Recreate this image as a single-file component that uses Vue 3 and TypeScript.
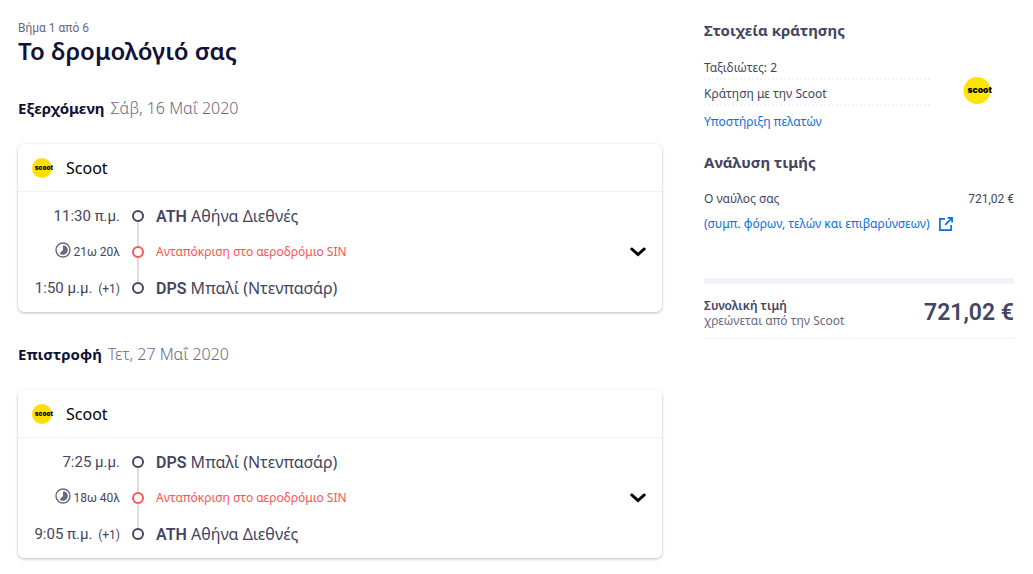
<script setup lang="ts">
interface Stop {
  time: string
  nextDay?: string
  code: string
  name: string
}

interface Leg {
  title: string
  date: string
  from: Stop
  duration: string
  layover: string
  to: Stop
}

const carrier = 'Scoot'

const legs: Leg[] = [
  {
    title: 'Εξερχόμενη',
    date: 'Σάβ, 16 Μαΐ 2020',
    from: { time: '11:30 π.μ.', code: 'ATH', name: 'Αθήνα Διεθνές' },
    duration: '21ω 20λ',
    layover: 'Ανταπόκριση στο αεροδρόμιο SIN',
    to: { time: '1:50 μ.μ.', nextDay: '(+1)', code: 'DPS', name: 'Μπαλί (Ντενπασάρ)' },
  },
  {
    title: 'Επιστροφή',
    date: 'Τετ, 27 Μαΐ 2020',
    from: { time: '7:25 μ.μ.', code: 'DPS', name: 'Μπαλί (Ντενπασάρ)' },
    duration: '18ω 40λ',
    layover: 'Ανταπόκριση στο αεροδρόμιο SIN',
    to: { time: '9:05 π.μ.', nextDay: '(+1)', code: 'ATH', name: 'Αθήνα Διεθνές' },
  },
]
</script>

<template>
  <div class="page">
    <main>
      <p class="step">Βήμα 1 από 6</p>
      <h1>Το δρομολόγιό σας</h1>

      <section v-for="leg in legs" :key="leg.title" class="leg">
        <h2>{{ leg.title }} <span class="date">{{ leg.date }}</span></h2>
        <article class="card">
          <header class="carrier">
            <svg class="logo-small" viewBox="0 0 31 28" aria-hidden="true">
              <circle cx="14" cy="14" r="14" fill="#ffdf00" />
              <text x="4" y="17" class="logo-text">scoot</text>
            </svg>
            <span>{{ carrier }}</span>
          </header>
          <div class="body">
            <ol class="route">
              <li>
                <span class="time">{{ leg.from.time }}</span>
                <span class="dot"></span>
                <span class="place"><b>{{ leg.from.code }}</b> {{ leg.from.name }}</span>
              </li>
              <li class="layover">
                <span class="duration">
                  <svg class="clock" viewBox="0 0 16 16" aria-hidden="true">
                    <circle cx="8" cy="8" r="7" fill="none" stroke="currentColor" stroke-width="1.4" />
                    <path d="M8 3.2a4.8 4.8 0 1 1-3.4 8.2L8 8z" fill="currentColor" />
                  </svg>
                  <span>{{ leg.duration }}</span>
                </span>
                <span class="dot"></span>
                <span>{{ leg.layover }}</span>
              </li>
              <li>
                <span class="time">{{ leg.to.time }} <small>{{ leg.to.nextDay }}</small></span>
                <span class="dot"></span>
                <span class="place"><b>{{ leg.to.code }}</b> {{ leg.to.name }}</span>
              </li>
            </ol>
            <button class="toggle" type="button" aria-label="Λεπτομέρειες" aria-expanded="false">
              <svg viewBox="0 0 16 10" aria-hidden="true">
                <path d="M1.7 1.9 8 7.6l6.3-5.7" fill="none" stroke="#000" stroke-width="2.8" stroke-linecap="round" stroke-linejoin="miter" />
              </svg>
            </button>
          </div>
        </article>
      </section>
    </main>

    <aside>
      <h3>Στοιχεία κράτησης</h3>
      <div class="booking">
        <div class="facts">
          <p class="fact">Ταξιδιώτες: 2</p>
          <p class="fact">Κράτηση με την Scoot</p>
          <a class="support" href="#">Υποστήριξη πελατών</a>
        </div>
        <svg class="logo-large" viewBox="0 0 31 28" aria-hidden="true">
          <circle cx="14" cy="14" r="14" fill="#ffe600" />
          <text x="4" y="17" class="logo-text">scoot</text>
        </svg>
      </div>

      <h3 class="breakdown">Ανάλυση τιμής</h3>
      <p class="fare"><span>Ο ναύλος σας</span><span class="amount">721,02 €</span></p>
      <a class="taxes" href="#">
        (συμπ. φόρων, τελών και επιβαρύνσεων)
        <svg viewBox="0 0 14 14" aria-hidden="true">
          <path d="M6 1.8H.9v11.3h11.2V8M8.5.9h4.6v4.6M13 1 6.2 7.8" fill="none" stroke="currentColor" stroke-width="1.7" />
        </svg>
      </a>

      <div class="total">
        <p><strong>Συνολική τιμή</strong><span>χρεώνεται από την Scoot</span></p>
        <span class="price">721,02 €</span>
      </div>
    </aside>
  </div>
</template>

<style>
body {
  margin: 0;
  background: #fff;
}
</style>

<style scoped>
.page {
  display: grid;
  grid-template-columns: minmax(0, 1fr) 310px;
  gap: 42px;
  padding: 20px 19px 16px 18px;
  font-family: "Noto Sans", "Liberation Sans", sans-serif;
  font-size: 12px;
  line-height: 16px;
  color: #444560;
}

h1, h2, h3, p, ol {
  margin: 0;
  padding: 0;
}

a {
  color: #0770e3;
  text-decoration: none;
}

.step {
  font-family: Roboto, "Noto Sans", sans-serif;
  color: #68697f;
}

h1 {
  font-size: 24px;
  line-height: 30px;
  color: #111236;
  font-weight: 600;
}

.leg {
  margin-top: 30px;
}

h2 {
  margin-bottom: 24px;
  font-size: 15px;
  line-height: 24px;
  color: #111236;
}

.date {
  margin-left: 2px;
  font-size: 16px;
  font-weight: 300;
  color: #68697f;
}

.card {
  border-radius: 6px;
  background: #fff;
  box-shadow: 0 1px 3px rgba(37, 32, 31, 0.3);
}

.carrier {
  display: flex;
  align-items: center;
  gap: 12px;
  height: 47px;
  padding-left: 14px;
  border-bottom: 1px solid #f1f2f8;
  font-size: 16px;
  color: #000;
}

.logo-small {
  flex: none;
  width: 22px;
  height: 20px;
  overflow: visible;
}

.logo-text {
  font: 900 9px "Inter", sans-serif;
  fill: #000;
}

.body {
  display: flex;
  align-items: center;
  padding: 6px 16px 6px 0;
}

.route {
  flex: 1;
  list-style: none;
}

.route li {
  display: grid;
  grid-template-columns: 102px 36px minmax(0, 1fr);
  align-items: center;
  height: 36px;
}

.time,
.place {
  line-height: 24px;
}

.place {
  font-size: 16px;
}

.place b {
  font-family: Roboto, "Noto Sans", sans-serif;
  font-weight: 600;
}

.time,
.duration {
  font-family: Roboto, "Noto Sans", sans-serif;
  text-align: right;
  white-space: nowrap;
}

.time {
  font-size: 15px;
}

.time small {
  margin-left: 2px;
  font-size: 12px;
}

.layover {
  padding-top: 0;
  color: #ff5452;
}

.duration {
  display: flex;
  align-items: center;
  justify-content: flex-end;
  gap: 3px;
  color: #444560;
}

.clock {
  width: 16px;
  height: 16px;
  margin-bottom: 4px;
  color: #68697f;
}

.dot {
  position: relative;
  justify-self: center;
  box-sizing: border-box;
  width: 12px;
  height: 12px;
  border: 2px solid #444560;
  border-radius: 50%;
}

.layover .dot {
  border-color: #ff5452;
}

li:not(:last-child) .dot::after {
  content: "";
  position: absolute;
  top: 10px;
  left: 3px;
  width: 2px;
  height: 24px;
  background: #dddde5;
}

.toggle {
  padding: 0;
  border: 0;
  background: none;
  cursor: pointer;
}

.toggle svg {
  display: block;
  width: 16px;
  height: 10px;
}

aside {
  margin-top: -2px;
}

h3 {
  font-size: 15px;
  line-height: 24px;
  font-weight: 700;
}

.booking {
  display: flex;
  align-items: center;
  justify-content: space-between;
  margin-top: 12px;
  padding-right: 20px;
}

.facts {
  width: 226px;
}

.fact {
  padding: 6px 0 3px;
  border-bottom: 2px dotted #f1f2f8;
  line-height: 15px;
}

.support {
  display: block;
  margin-top: 8px;
}

.logo-large {
  width: 31px;
  height: 27px;
  margin-bottom: 4px;
  overflow: visible;
}

.breakdown {
  margin-top: 20px;
}

.fare {
  display: flex;
  justify-content: space-between;
  margin-top: 17px;
}

.amount {
  font-family: Roboto, "Noto Sans", sans-serif;
}

.taxes {
  display: flex;
  align-items: center;
  gap: 9px;
  margin-top: 9px;
  white-space: nowrap;
}

.taxes svg {
  flex: none;
  width: 14px;
  height: 14px;
}

.total {
  display: flex;
  align-items: center;
  justify-content: space-between;
  margin-top: 46px;
  padding: 14px 0 10px;
  border-top: 6px solid #f1f2f8;
  border-bottom: 1px solid #f1f2f8;
}

.total strong,
.total p span {
  display: block;
  line-height: 15px;
}

.total strong {
  font-weight: 600;
}

.total p span {
  color: #68697f;
}

.price {
  font-family: Roboto, "Noto Sans", sans-serif;
  font-size: 23px;
  line-height: 28px;
  font-weight: 600;
}
</style>
